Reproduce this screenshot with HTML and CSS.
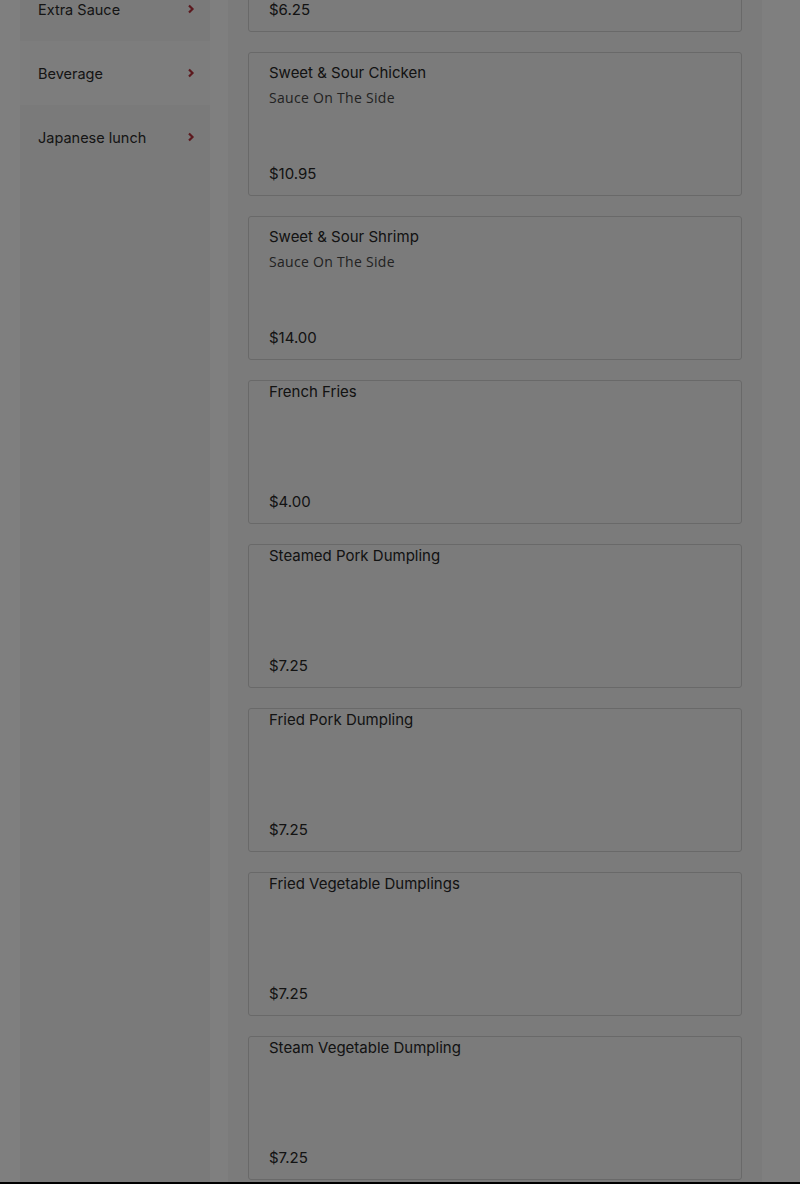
FILE: index.html
```html
<!DOCTYPE html>
<html lang="en">
<head>
    <meta charset="UTF-8">
    <meta name="viewport" content="width=device-width, initial-scale=1.0">
    <title>Menu</title>
    <link rel="stylesheet" href="styles.css">
</head>
<body>

    <div class="page">

        <!-- Category list -->
        <ul class="categories">
            <li class="category">
                <span>Extra Sauce</span>
                <svg class="chevron" width="8" height="10" viewBox="0 0 8 10"><path d="M2 1.5 L5.5 5 L2 8.5" fill="none" stroke="currentColor" stroke-width="2.2"/></svg>
            </li>
            <li class="category">
                <span>Beverage</span>
                <svg class="chevron" width="8" height="10" viewBox="0 0 8 10"><path d="M2 1.5 L5.5 5 L2 8.5" fill="none" stroke="currentColor" stroke-width="2.2"/></svg>
            </li>
            <li class="category">
                <span>Japanese lunch</span>
                <svg class="chevron" width="8" height="10" viewBox="0 0 8 10"><path d="M2 1.5 L5.5 5 L2 8.5" fill="none" stroke="currentColor" stroke-width="2.2"/></svg>
            </li>
        </ul>

        <!-- Items -->
        <div class="items">
            <div class="item plain">
                <div class="item-name">Shrimp Sauce</div>
                <div class="item-price">$6.25</div>
            </div>
            <div class="item">
                <div>
                    <div class="item-name">Sweet &amp; Sour Chicken</div>
                    <div class="item-desc">Sauce On The Side</div>
                </div>
                <div class="item-price">$10.95</div>
            </div>
            <div class="item">
                <div>
                    <div class="item-name">Sweet &amp; Sour Shrimp</div>
                    <div class="item-desc">Sauce On The Side</div>
                </div>
                <div class="item-price">$14.00</div>
            </div>
            <div class="item plain">
                <div class="item-name">French Fries</div>
                <div class="item-price">$4.00</div>
            </div>
            <div class="item plain">
                <div class="item-name">Steamed Pork Dumpling</div>
                <div class="item-price">$7.25</div>
            </div>
            <div class="item plain">
                <div class="item-name">Fried Pork Dumpling</div>
                <div class="item-price">$7.25</div>
            </div>
            <div class="item plain">
                <div class="item-name">Fried Vegetable Dumplings</div>
                <div class="item-price">$7.25</div>
            </div>
            <div class="item plain">
                <div class="item-name">Steam Vegetable Dumpling</div>
                <div class="item-price">$7.25</div>
            </div>
        </div>

    </div>

    <!-- Dim layer behind an open dialog -->
    <div class="overlay"></div>
    <div class="bottom-edge"></div>

</body>
</html>
```

FILE: styles.css
```css
body {
    margin: 0;
    background-color: #fff;
    font-family: Inter, "Noto Sans", sans-serif;
    color: #333;
    overflow: hidden;
    height: 1184px;
}

.page {
    display: flex;
    align-items: flex-start;
    gap: 18px;
    padding: 0 38px 0 20px;
    height: 1184px;
}

/* Category sidebar */
.categories {
    list-style: none;
    margin: -23px 0 0;
    padding: 0;
    width: 190px;
    height: 1300px;
    background-color: #f5f5f5;
}

.category {
    display: flex;
    align-items: center;
    justify-content: space-between;
    height: 64px;
    padding: 0 15px 0 18px;
    font-size: 14.5px;
    color: #2b2b2b;
}

.category:nth-child(even) {
    background-color: #fafafa;
}

.chevron {
    color: #b8323c;
}

/* Item cards */
.items {
    flex: 1;
    margin-top: -112px;
    padding: 0 20px;
    height: 1400px;
    background-color: #f6f6f6;
    display: flex;
    flex-direction: column;
    gap: 20px;
}

.item {
    box-sizing: border-box;
    height: 144px;
    border: 1px solid #d2d2d2;
    border-radius: 3px;
    padding: 9px 20px 10px;
    display: flex;
    flex-direction: column;
    justify-content: space-between;
}

/* cards with no description sit their name at the very top */
.item.plain {
    padding-top: 0;
}

.item-name {
    font-size: 15px;
    font-weight: 400;
    line-height: 22px;
    color: #262626;
}

.item-desc {
    margin-top: 3px;
    font-family: "Open Sans", sans-serif;
    font-size: 14px;
    line-height: 22px;
    letter-spacing: 0.3px;
    color: #444;
}

.item-price {
    font-size: 15px;
    font-weight: 400;
    line-height: 22px;
    color: #262626;
}

.overlay {
    position: fixed;
    inset: 0;
    background-color: rgba(0, 0, 0, 0.5);
}

.bottom-edge {
    position: fixed;
    left: 0;
    right: 0;
    bottom: 0;
    height: 2px;
    background-color: #000;
}
```
